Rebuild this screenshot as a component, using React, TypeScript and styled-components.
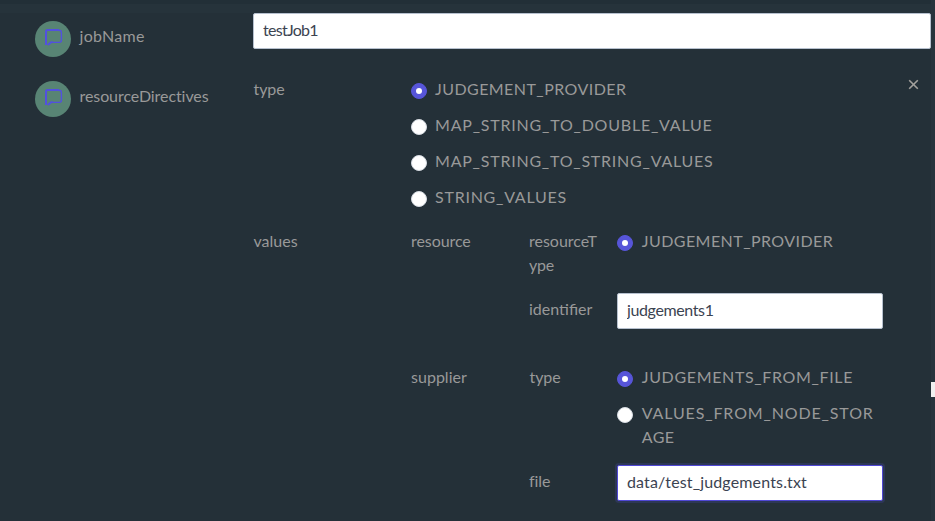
import React from "react";
import styled, { createGlobalStyle } from "styled-components";

const GlobalStyle = createGlobalStyle`
  * { box-sizing: border-box; }
  body { margin: 0; background: #243038; overflow: hidden; }
`;

const Page = styled.main`
  display: grid;
  grid-template-columns: 931px 4px;
  width: 935px;
  height: 521px;
  overflow: hidden;
  background: #243038;
  color: #999;
  font: 16px/24px Lato, "Open Sans", sans-serif;
`;

const Form = styled.div`
  display: flex;
  flex-direction: column;
`;

const TopStrip = styled.div`
  height: 13px;
  flex: none;
  background: #26333b;
  border-top: 4px solid #222f37;
`;

const ScrollTrack = styled.div`
  background: #27343d;
  padding-top: 382px;
`;

const ScrollThumb = styled.div`
  height: 15px;
  background: #f0f0f0;
`;

const JobRow = styled.section<{ $height?: number }>`
  display: grid;
  grid-template-columns: 218px minmax(0, 1fr);
  padding-left: 35px;
  height: ${(p) => (p.$height ? `${p.$height}px` : "auto")};
`;

const FieldName = styled.div<{ $top: number }>`
  display: flex;
  align-items: flex-start;
  gap: 8.5px;
  padding-top: ${(p) => p.$top}px;
`;

const Badge = styled.span`
  display: flex;
  justify-content: center;
  flex: none;
  width: 36px;
  height: 36px;
  padding-top: 7px;
  border-radius: 50%;
  background: #588474;
`;

const Text = styled.span<{ $track?: number; $indent?: number }>`
  display: block;
  white-space: pre;
  letter-spacing: ${(p) => p.$track ?? 0}px;
  padding-left: ${(p) => p.$indent ?? 0}px;
`;

const NameText = styled(Text)`
  margin-top: 3px;
`;

const Input = styled.input<{ $track: number; $focused?: boolean }>`
  display: block;
  width: 100%;
  height: 36px;
  padding: 0 8px 3px 9px;
  border: 1px solid ${(p) => (p.$focused ? "#5048d5" : "#b6c0ce")};
  border-radius: 2px;
  outline: none;
  background: #fff;
  color: #3b4351;
  font: inherit;
  letter-spacing: ${(p) => p.$track}px;
  box-shadow: ${(p) => (p.$focused ? "0 0 0 2px rgba(87, 85, 217, 0.2)" : "none")};
`;

const Directive = styled.div`
  display: grid;
  grid-template-columns: 158px 472px 1fr;
  row-gap: 20px;
  padding-top: 4px;
  align-content: start;
`;

const CloseButton = styled.button`
  display: flex;
  justify-self: start;
  align-self: start;
  margin: 2px 0 0 25px;
  padding: 0;
  border: 0;
  background: none;
  color: #a3a19d;
`;

const RadioList = styled.div`
  display: flex;
  flex-direction: column;
  gap: 12px;
`;

const RadioRow = styled.label`
  display: flex;
  align-items: flex-start;
  gap: 8px;
`;

const RadioMark = styled.span<{ $checked?: boolean }>`
  flex: none;
  display: grid;
  place-items: center;
  width: 16px;
  height: 16px;
  margin-top: 6px;
  border: 1px solid ${(p) => (p.$checked ? "#5755d9" : "#d7dce3")};
  border-radius: 50%;
  background: ${(p) => (p.$checked ? "#5755d9" : "#fff")};

  &::after {
    content: "";
    width: 6px;
    height: 6px;
    border-radius: 50%;
    background: #fff;
  }
`;

const Values = styled.div`
  display: flex;
  flex-direction: column;
  gap: 36px;
`;

const ValueGroup = styled.div`
  display: grid;
  grid-template-columns: 118px 88px 266px;
`;

const Cell = styled.div<{ $top?: number; $column?: number }>`
  padding-top: ${(p) => p.$top ?? 0}px;
  grid-column: ${(p) => p.$column ?? "auto"};
`;

function CommentBadge() {
  return (
    <Badge>
      <svg width="20" height="20" viewBox="0 0 20 20" fill="none" stroke="#5250df">
        <path d="M3 17V3.5Q3 2 4.5 2H16" strokeWidth="2" />
        <path d="M16 2.2Q18.4 2.2 18.4 4.5V12.3Q18.4 14.4 16.3 14.4H9" strokeWidth="1.35" />
        <path d="M9.5 14Q7.8 14 6.8 15.2L4.8 17" strokeWidth="2" />
      </svg>
    </Badge>
  );
}

function Option({ lines, tracks, checked, indent = 0 }: {
  lines: string[];
  tracks: number[];
  checked?: boolean;
  indent?: number;
}) {
  return (
    <RadioRow>
      <RadioMark $checked={checked} />
      <span>
        {lines.map((line, i) => (
          <Text key={line} $track={tracks[i]} $indent={indent}>{line}</Text>
        ))}
      </span>
    </RadioRow>
  );
}

export default function App() {
  return (
    <>
      <GlobalStyle />
      <Page>
        <Form>
          <TopStrip />
          <JobRow $height={60}>
            <FieldName $top={8}>
              <CommentBadge />
              <NameText $track={0.3}>jobName</NameText>
            </FieldName>
            <Input $track={-0.72} defaultValue="testJob1" />
          </JobRow>
          <JobRow>
            <FieldName $top={8}>
              <CommentBadge />
              <NameText $track={-0.08}>resourceDirectives</NameText>
            </FieldName>
            <Directive>
              <Text $track={-0.1} $indent={0.5}>type</Text>
              <RadioList>
                <Option checked lines={["JUDGEMENT_PROVIDER"]} tracks={[0.44]} />
                <Option lines={["MAP_STRING_TO_DOUBLE_VALUE"]} tracks={[0.79]} />
                <Option lines={["MAP_STRING_TO_STRING_VALUES"]} tracks={[0.77]} />
                <Option lines={["STRING_VALUES"]} tracks={[0.75]} />
              </RadioList>
              <CloseButton aria-label="Remove">
                <svg width="11" height="11" viewBox="0 0 11 11" stroke="currentColor" strokeWidth="1.6">
                  <path d="M1.2 1.2 9.8 9.8M9.8 1.2 1.2 9.8" />
                </svg>
              </CloseButton>
              <Text $track={0.02} $indent={0.5}>values</Text>
              <Values>
                <ValueGroup>
                  <Text $track={-0.07}>resource</Text>
                  <div>
                    <Text $track={0}>resourceT</Text>
                    <Text $track={-0.2}>ype</Text>
                  </div>
                  <Option checked lines={["JUDGEMENT_PROVIDER"]} tracks={[0.44]} indent={0.8} />
                  <Cell $column={2} $top={20}>
                    <Text $track={0}>identifier</Text>
                  </Cell>
                  <Cell $top={16}>
                    <Input $track={-0.38} defaultValue="judgements1" />
                  </Cell>
                </ValueGroup>
                <ValueGroup>
                  <Text $track={0.02}>supplier</Text>
                  <Text $track={-0.1} $indent={0.5}>type</Text>
                  <RadioList>
                    <Option checked lines={["JUDGEMENTS_FROM_FILE"]} tracks={[0.65]} indent={0.8} />
                    <Option lines={["VALUES_FROM_NODE_STOR", "AGE"]} tracks={[0.86, 0.39]} indent={0.8} />
                  </RadioList>
                  <Cell $column={2} $top={20}>
                    <Text $track={-0.1}>file</Text>
                  </Cell>
                  <Cell $top={16}>
                    <Input $focused $track={0.15} defaultValue="data/test_judgements.txt" />
                  </Cell>
                </ValueGroup>
              </Values>
            </Directive>
          </JobRow>
        </Form>
        <ScrollTrack>
          <ScrollThumb />
        </ScrollTrack>
      </Page>
    </>
  );
}
